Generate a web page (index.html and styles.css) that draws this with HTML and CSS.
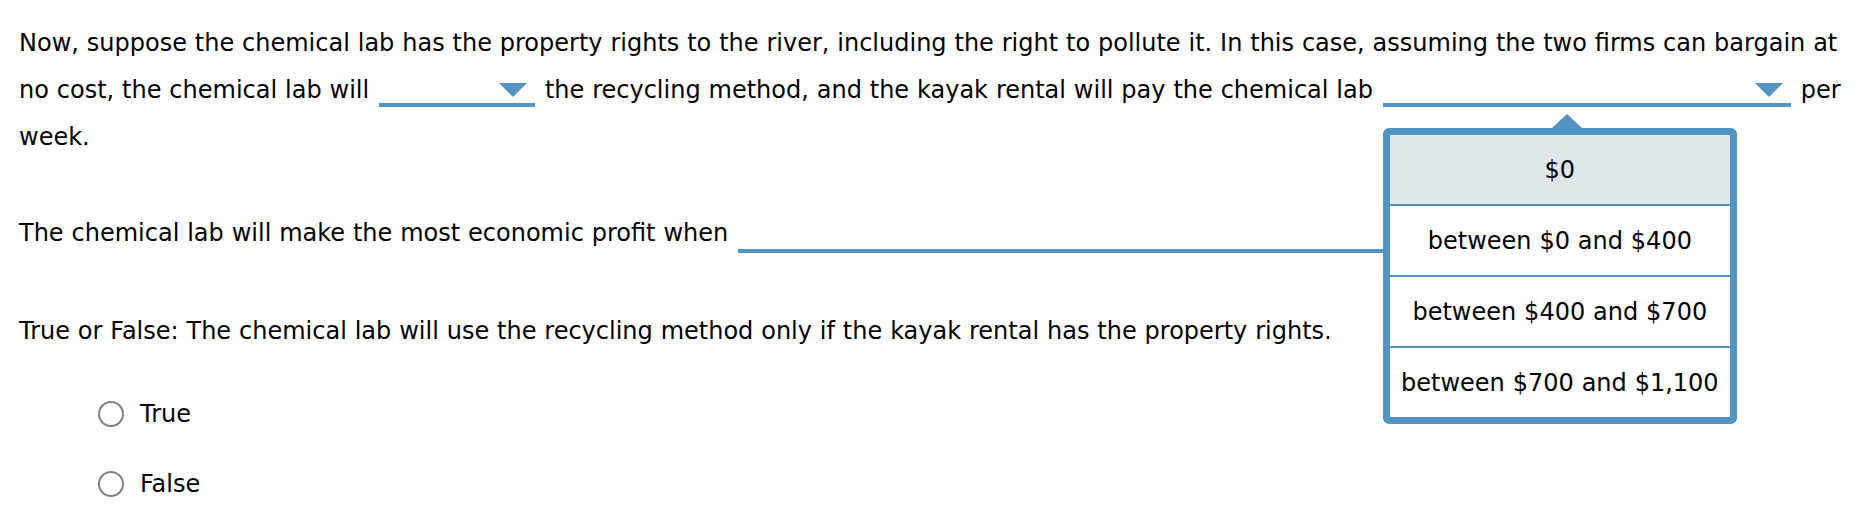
FILE: index.html
```html
<!doctype html>
<html>
<head>
<meta charset="utf-8">
<title>Property rights question</title>
  <link rel="stylesheet" href="styles.css">
</head>
<body>
  <div class="question">
    <p class="para first">Now, suppose the chemical lab has the property rights to the river, including the right to pollute it. In this case, assuming the two firms can bargain at no cost, the chemical lab will
      <span class="pick pick-short"><span class="caret"></span></span>
      the recycling method, and the kayak rental will pay the chemical lab
      <span class="pick pick-long"><span class="caret"></span>
        <span class="menu">
          <span class="menu-arrow"></span>
          <span class="menu-item selected">$0</span>
          <span class="menu-item">between $0 and $400</span>
          <span class="menu-item">between $400 and $700</span>
          <span class="menu-item">between $700 and $1,100</span>
        </span>
      </span>
      per week.</p>

    <p class="para">The chemical lab will make the most economic profit when
      <span class="pick pick-wide"><span class="caret"></span></span></p>

    <p class="para tf">True or False: The chemical lab will use the recycling method only if the kayak rental has the property rights.</p>

    <div class="options">
      <label class="option"><span class="radio"></span>True</label>
      <label class="option"><span class="radio"></span>False</label>
    </div>
  </div>
</body>
</html>
```

FILE: styles.css
```css
body {
  margin: 0;
  padding: 0;
  background: #fff;
  color: #000;
  font-family: 'DejaVu Sans', sans-serif;
  font-size: 24px;
}

.question {
  padding: 20px 0 0 19px;
  width: 1836px;
}

.para {
  margin: 0;
  line-height: 47px;
  word-spacing: 0.25px;
}
.para + .para {
  margin-top: 49px;
}
.para.tf {
  margin-top: 51px;
}

.pick {
  display: inline-block;
  position: relative;
  height: 34px;
  border-bottom: 4px solid #5393c4;
  vertical-align: -9px;
  margin: 0 2px;
}
.pick-short { width: 156px; }
.pick-long { width: 408px; }
.pick-wide {
  width: 700px;
  vertical-align: -12px;
}

.caret {
  position: absolute;
  right: 8px;
  top: 14px;
  width: 0;
  height: 0;
  border-left: 14px solid transparent;
  border-right: 14px solid transparent;
  border-top: 14px solid #5393c4;
}

.menu {
  position: absolute;
  top: 59px;
  left: 0;
  z-index: 5;
  display: flex;
  flex-direction: column;
  width: 340px;
  border: 7px solid #5393c4;
  border-radius: 6px;
  background: #fff;
  line-height: 26px;
}
.menu-arrow {
  position: absolute;
  top: -21px;
  left: 162px;
  width: 0;
  height: 0;
  border-left: 15px solid transparent;
  border-right: 15px solid transparent;
  border-bottom: 14px solid #5393c4;
}
.menu-item {
  display: block;
  text-align: center;
  padding: 22px 0 21px;
  white-space: nowrap;
}
.menu-item + .menu-item {
  border-top: 2px solid #5393c4;
}
.menu-item.selected {
  background: #dfe7ea;
}

.options {
  padding: 46px 0 0 79px;
  display: flex;
  flex-direction: column;
  gap: 44px;
}
.option {
  display: flex;
  align-items: center;
  gap: 16px;
  line-height: 26px;
}
.radio {
  box-sizing: border-box;
  width: 26px;
  height: 26px;
  border: 2px solid #808080;
  border-radius: 50%;
}
```
